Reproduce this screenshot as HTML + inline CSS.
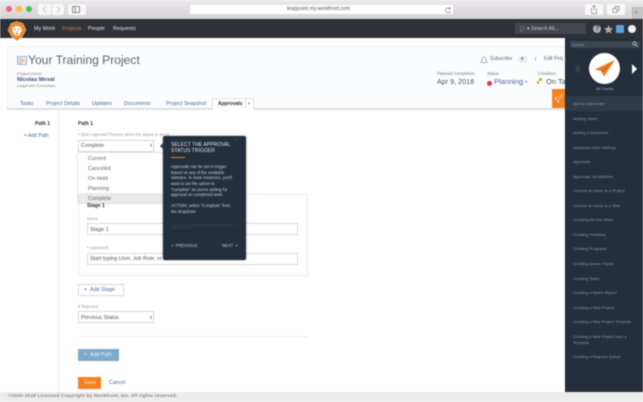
<!DOCTYPE html>
<html><head><meta charset="utf-8"><style>
html,body{margin:0;padding:0;width:643px;height:402px;overflow:hidden;background:#fff}
#w{position:relative;width:643px;height:402px;overflow:hidden;font-family:"Liberation Sans",sans-serif;filter:blur(.5px);background:#fff}
#w div,#w span.a{position:absolute;white-space:nowrap}
.t{line-height:8px;height:8px}
.sel{background:#fff;border:1px solid #dcdcdc;border-radius:1px;box-sizing:border-box;box-shadow:0 0 1px #ccc}
.in{background:#fff;border:1px solid #dadada;box-sizing:border-box}
.g{color:#9a9ea3;font-size:4.2px}
.d{color:#555;font-size:5.4px}
.s{color:#8d99a6;font-size:4px;left:573px}
.p{color:#c4ccd4;font-size:4.1px;left:171px}
</style></head><body><div id="w">
<!-- browser chrome -->
<div style="left:0;top:0;width:643px;height:19px;background:linear-gradient(#eceaec,#d3d2d3)"></div>
<div style="left:6px;top:6px;width:6px;height:6px;border-radius:50%;background:#f2647a"></div>
<div style="left:16px;top:6px;width:6px;height:6px;border-radius:50%;background:#f6bd3a"></div>
<div style="left:26px;top:6px;width:6px;height:6px;border-radius:50%;background:#3ec84a"></div>
<div style="left:38px;top:4px;width:13px;height:11px;background:#f7f7f7;border-radius:2px"></div>
<div style="left:52px;top:4px;width:12px;height:11px;background:#f7f7f7;border-radius:2px"></div>
<div style="left:68px;top:4px;width:18px;height:11px;background:#f7f7f7;border-radius:2px"></div>
<svg style="position:absolute;left:38px;top:4px" width="48" height="11" fill="none" stroke="#bbb" stroke-width=".8"><path d="M8 3L5 5.500 8 8M19 3l3 2.500L19 8"/><rect x="34.500" y="2.500" width="7" height="6" stroke="#777"/><path d="M37 2.500v6" stroke="#777"/></svg>
<div style="left:190px;top:5px;width:263px;height:9px;background:#fff;border-radius:1px"></div>
<div class="t" style="left:287px;top:5px;font-size:5.200px;color:#555">leappoint.my.workfront.com</div>
<svg style="position:absolute;left:444px;top:6px" width="8" height="8" fill="none" stroke="#888" stroke-width=".7"><path d="M6 2.500A2.500 2.500 0 1 0 6.500 5M6 1v2H4"/></svg>
<div style="left:585px;top:4px;width:18px;height:11px;background:#f8f8f8;border-radius:2px"></div>
<div style="left:607px;top:4px;width:18px;height:11px;background:#f8f8f8;border-radius:2px"></div>
<svg style="position:absolute;left:585px;top:4px" width="40" height="11" fill="none" stroke="#888" stroke-width=".7"><path d="M7 4.500H6.500V9.500H11.500V4.500H11M9 1.500V6.500M7.500 3L9 1.500 10.500 3"/><path d="M28 4.500h4v4h-4zM30 4.500V2.500h4v4h-2"/></svg>
<div style="left:632px;top:7px;width:11px;height:12px;background:#c6c6c6;border:1px solid #b5b5b5;box-sizing:border-box"></div>
<div class="t" style="left:634px;top:9px;font-size:8px;color:#888">+</div>
<!-- nav -->
<div style="left:0;top:19px;width:643px;height:19px;background:#2e3238"></div>
<svg style="position:absolute;left:7px;top:21px" width="20" height="20"><path d="M10 .5L16 2.500 19 9 15 16 10 19.500 5 16 1 9 4 2.500Z" fill="#ec8a32" stroke="#f2ae70" stroke-width=".6"/><path d="M10 5c3 0 5 2 4.500 5L12 14.500H8L5.500 10C5 7 7 5 10 5Z" fill="#fff"/><path d="M7 8.500h2.200M10.800 8.500H13M10 10v2.500M8.500 13h3" stroke="#d97a25" stroke-width=".9"/></svg>
<div class="t" style="left:34px;top:25px;font-size:5.400px;color:#dfe1e4">My Work</div>
<div class="t" style="left:62px;top:25px;font-size:5.400px;color:#c9803f">Projects</div>
<div class="t" style="left:88px;top:25px;font-size:5.400px;color:#dfe1e4">People</div>
<div class="t" style="left:113px;top:25px;font-size:5.400px;color:#dfe1e4">Requests</div>
<div style="left:515px;top:23px;width:71px;height:11px;background:#43474d;border-radius:1px"></div>
<svg style="position:absolute;left:518px;top:25px" width="8" height="8" fill="none" stroke="#777" stroke-width=".7"><circle cx="4.500" cy="3.500" r="2"/><path d="M3 5L1.500 6.500"/></svg>
<div class="t" style="left:527px;top:25px;font-size:5.200px;color:#c8cbcf">▾ Search All...</div>
<div style="left:593px;top:25px;width:8px;height:8px;border-radius:50%;background:#a9adb1"></div>
<div class="t" style="left:595.500px;top:25px;font-size:6px;color:#2e3238;font-weight:bold">?</div>
<svg style="position:absolute;left:604px;top:25px" width="9" height="9"><path d="M4.500 0l1.300 3 3.200.3-2.400 2.100.7 3.100-2.800-1.700-2.800 1.700.7-3.100L0 3.300 3.200 3z" fill="#a9adb1"/></svg>
<div style="left:616px;top:25px;width:8px;height:8px;background:#5e9fe0;border-radius:1px"></div>
<div style="left:628px;top:25px;width:8px;height:8px;border-radius:50%;background:#eef0f3"></div>
<!-- project header -->
<div style="left:7px;top:46px;width:558px;height:64px;background:#fbfcfe;border-top:1px solid #ececec;border-left:1px solid #efefef;box-sizing:border-box"></div>
<div style="left:7px;top:108px;width:558px;height:2px;background:#dedede"></div>
<svg style="position:absolute;left:17px;top:56px" width="10" height="9"><rect width="10" height="9" fill="#9db8cf"/><rect x="1" y="1" width="8" height="7" fill="#e9eef3"/><path d="M2 3h4M2 5h6M2 7h3" stroke="#e08a3a" stroke-width=".8"/></svg>
<div style="left:28px;top:52px;font-size:12.100px;line-height:16px;color:#5f646a">Your Training Project</div>
<div class="t" style="left:17px;top:70px;font-size:4px;color:#777">Project Owner</div>
<div class="t" style="left:17px;top:76px;font-size:5.700px;color:#37508c;font-weight:bold">Nicolas Mexal</div>
<div class="t" style="left:17px;top:82px;font-size:4px;color:#777">LeapPoint Consultant</div>
<div class="t" style="left:20px;top:100px;font-size:5.300px;color:#4d6a8e">Tasks</div>
<div class="t" style="left:46px;top:100px;font-size:5.300px;color:#4d6a8e">Project Details</div>
<div class="t" style="left:92px;top:100px;font-size:5.300px;color:#4d6a8e">Updates</div>
<div class="t" style="left:124px;top:100px;font-size:5.300px;color:#4d6a8e">Documents</div>
<div class="t" style="left:166px;top:100px;font-size:5.300px;color:#4d6a8e">Project Snapshot</div>
<div style="left:212px;top:98px;width:42px;height:12px;background:#fff;border:1px solid #e2e2e2;border-bottom:none;box-sizing:border-box"></div>
<div style="left:245px;top:99px;width:1px;height:9px;background:#e5e5e5"></div>
<div class="t" style="left:218px;top:100px;font-size:5px;color:#333;font-weight:bold">Approvals</div>
<div class="t" style="left:248px;top:100px;font-size:4px;color:#777">▾</div>
<svg style="position:absolute;left:480px;top:56px" width="8" height="8" fill="none" stroke="#6d8198" stroke-width=".6"><path d="M1 6.500h6L6 5V3A2 2 0 0 0 2 3v2ZM3.500 7.500h1"/></svg>
<div class="t" style="left:490px;top:55px;font-size:5px;color:#4d6a8e">Subscribe</div>
<div style="left:517px;top:56px;width:11px;height:7px;background:#eef0f3;border-radius:3px"></div>
<div class="t" style="left:521px;top:55px;font-size:4.500px;color:#555;font-weight:bold">0</div>
<div style="left:535px;top:57px;width:1px;height:4px;background:#bbb"></div>
<div class="t" style="left:544px;top:55px;font-size:5px;color:#4d6a8e">Edit Proj</div>
<div class="t" style="left:437px;top:70px;font-size:4.200px;color:#777">Planned Completion</div>
<div style="left:437px;top:77px;font-size:7.200px;line-height:10px;color:#555">Apr 9, 2018</div>
<div class="t" style="left:487px;top:70px;font-size:4.200px;color:#777">Status</div>
<div style="left:487px;top:81px;width:5px;height:5px;border-radius:50%;background:#e8353f"></div>
<div style="left:494px;top:77px;font-size:7.500px;line-height:10px;color:#4a6aa0">Planning <span style="font-size:4px;vertical-align:1px">▾</span></div>
<div class="t" style="left:538px;top:70px;font-size:4.200px;color:#777">Condition</div>
<div style="left:539px;top:78px;width:3px;height:3px;background:#8cc63f;border-radius:1px"></div>
<div style="left:537px;top:81px;width:2px;height:3px;background:#e3a23a"></div>
<div style="left:546px;top:77px;font-size:7.500px;line-height:10px;color:#555">On Ta</div>
<div style="left:552px;top:89px;width:13px;height:19px;background:#f58220"></div>
<svg style="position:absolute;left:554px;top:94px" width="9" height="9"><path d="M8.500 .5L.5 4.500 3 5.500 4 8.500Z" fill="none" stroke="#fbd3ac" stroke-width=".7"/></svg>
<!-- left col -->
<div style="left:58px;top:110px;width:1px;height:282px;background:#eee"></div>
<div class="t" style="left:35px;top:120px;font-size:5px;color:#333;font-weight:bold">Path 1</div>
<div class="t" style="left:24px;top:132px;font-size:5px;color:#4d6a9e">+ Add Path</div>
<!-- main -->
<div class="t" style="left:78px;top:120px;font-size:5px;color:#333;font-weight:bold">Path 1</div>
<div class="t g" style="left:78px;top:131px">• Start Approval Process when the status is set to</div>
<div style="left:78px;top:194px;width:230px;height:82px;border:1px solid #efefef;box-sizing:border-box"></div>
<div class="sel" style="left:78px;top:140px;width:76px;height:12px"></div>
<div class="t d" style="left:81px;top:142px">Complete</div>
<div class="t" style="left:149px;top:142px;font-size:4.500px;color:#555">⇕</div>
<div class="t g" style="left:87px;top:215px">Name</div>
<div class="in" style="left:87px;top:223px;width:211px;height:12px"></div>
<div class="t d" style="left:90px;top:226px">Stage 1</div>
<div class="t g" style="left:87px;top:244px">• Approvers</div>
<div class="in" style="left:87px;top:253px;width:211px;height:12px"></div>
<div class="t d" style="left:90px;top:255px">Start typing User, Job Role, or Team</div>
<!-- dropdown -->
<div style="left:78px;top:153px;width:85px;height:50px;background:#fff;box-shadow:0 0 2px #bbb"></div>
<div style="left:78px;top:193px;width:85px;height:10px;background:#e9e9e9"></div>
<div class="t" style="left:87px;top:202px;font-size:5px;color:#333;font-weight:bold">Stage 1</div>
<div class="t d" style="left:88px;top:154.500px;color:#666">Current</div>
<div class="t d" style="left:88px;top:164.500px;color:#666">Canceled</div>
<div class="t d" style="left:88px;top:174.500px;color:#666">On Hold</div>
<div class="t d" style="left:88px;top:184.500px;color:#666">Planning</div>
<div class="t d" style="left:88px;top:194.500px;color:#666">Complete</div>
<!-- popover -->
<div style="left:160px;top:143px;width:0;height:0;border:3.500px solid transparent;border-right-color:#232f3d;border-left:none"></div>
<div style="left:163px;top:136px;width:83px;height:124px;background:#232f3d;border-radius:2px;box-shadow:0 0 2px #888"></div>
<div class="t" style="left:234px;top:136px;font-size:5px;color:#4c5866">×</div>
<div class="t" style="left:171px;top:141px;font-size:5.100px;color:#dfe3e7">SELECT THE APPROVAL</div>
<div class="t" style="left:171px;top:147px;font-size:5.100px;color:#dfe3e7">STATUS TRIGGER</div>
<div style="left:171px;top:157px;width:14px;height:1px;background:#d5803a"></div>
<div class="t p" style="top:163px">Approvals can be set to trigger</div>
<div class="t p" style="top:168.500px">based on any of the available</div>
<div class="t p" style="top:174px">statuses. In most instances, you'll</div>
<div class="t p" style="top:179.500px">want to set the option to</div>
<div class="t p" style="top:185.500px">"complete" as you're adding for</div>
<div class="t p" style="top:191px">approval on completed work.</div>
<div class="t p" style="top:202px">ACTION: select "Complete" from</div>
<div class="t p" style="top:208px">the dropdown</div>
<div class="t" style="left:171px;top:224px;font-size:4px;color:#3c4856">Step 2 of 6</div>
<div style="left:171px;top:225px;width:68px;height:1px;background:#2f3b49"></div>
<div class="t" style="left:171px;top:242px;font-size:4.200px;color:#c4ccd4">«&nbsp; PREVIOUS</div>
<div class="t" style="left:222px;top:242px;font-size:4.200px;color:#c4ccd4">NEXT &nbsp;»</div>
<!-- lower -->
<div class="sel" style="left:78px;top:284px;width:46px;height:12px"></div>
<div class="t" style="left:84px;top:286px;font-size:5.300px;color:#4d6a9e">+ &nbsp;Add Stage</div>
<div class="t g" style="left:78px;top:303px">If Rejected</div>
<div class="sel" style="left:78px;top:311px;width:76px;height:12px"></div>
<div class="t d" style="left:81px;top:314px">Previous Status</div>
<div class="t" style="left:149px;top:314px;font-size:4.500px;color:#555">⇕</div>
<div style="left:78px;top:336px;width:230px;height:1px;background:#eee"></div>
<div style="left:78px;top:349px;width:41px;height:12px;background:#7fa9cc"></div>
<div class="t" style="left:84px;top:351px;font-size:5.300px;color:#e6eff6">+ &nbsp;Add Path</div>
<div style="left:78px;top:377px;width:23px;height:12px;background:#f58220"></div>
<div class="t" style="left:84px;top:379px;font-size:5.300px;color:#fde3c8">Save</div>
<div class="t" style="left:109px;top:379px;font-size:5.300px;color:#4d6a9e">Cancel</div>
<!-- sidebar -->
<div style="left:565px;top:38px;width:78px;height:354px;background:#242f3b;border-left:1px solid #1f2833;box-sizing:border-box"></div>
<div style="left:570px;top:41px;width:70px;height:7px;background:#3a4753;border-radius:1px"></div>
<div class="t" style="left:572px;top:40.500px;font-size:3.800px;color:#8d99a6">Search...</div>
<svg style="position:absolute;left:632px;top:41px" width="6" height="6" fill="none" stroke="#c3cad1" stroke-width=".7"><circle cx="2.500" cy="2.500" r="1.600"/><path d="M3.800 3.800L5.500 5.500"/></svg>
<div style="left:589px;top:53px;width:31px;height:31px;border-radius:50%;background:#fff"></div>
<svg style="position:absolute;left:594px;top:60px" width="22" height="17"><path d="M21 0L.5 9.500 7 11 10 16.500Z" fill="#f0801f"/><path d="M21 0L7 11 9 12Z" fill="#c9661a"/></svg>
<svg style="position:absolute;left:573px;top:63px" width="66" height="12"><path d="M6.500 1L1.500 6 6.500 11Z" fill="#36424e"/><path d="M59 1L64 6 59 11Z" fill="#fff"/></svg>
<div class="t" style="left:596px;top:85px;font-size:3.900px;color:#a5afb9">All Guides</div>
<div style="left:566px;top:96px;width:77px;height:15px;background:#2e3b49"></div>
<div class="t s" style="top:99.500px">Ad-hoc Approvals</div>
<div class="t s" style="top:114.500px">Adding Users</div>
<div class="t s" style="top:129px">Adding a Document</div>
<div class="t s" style="top:143.500px">Advanced View Settings</div>
<div class="t s" style="top:158px">Approvals</div>
<div class="t s" style="top:172.500px">Approvals via MyWork</div>
<div class="t s" style="top:187px">Convert an Issue to a Project</div>
<div class="t s" style="top:201.500px">Convert an Issue to a Task</div>
<div class="t s" style="top:216px">Creating Ad-Hoc Work</div>
<div class="t s" style="top:230.500px">Creating Portfolios</div>
<div class="t s" style="top:245px">Creating Programs</div>
<div class="t s" style="top:260px">Creating Queue Topics</div>
<div class="t s" style="top:274.500px">Creating Tasks</div>
<div class="t s" style="top:289px">Creating a Matrix Report</div>
<div class="t s" style="top:303.500px">Creating a New Project</div>
<div class="t s" style="top:318px">Creating a New Project Template</div>
<div class="t s" style="top:333px">Creating a New Project from a</div>
<div class="t s" style="top:338.500px">Template</div>
<div class="t s" style="top:352.500px">Creating a Request Queue</div>
<!-- footer -->
<div style="left:0;top:392px;width:643px;height:10px;background:#ececec"></div>
<div class="t" style="left:8px;top:393px;font-size:4.900px;color:#8a8a8a;font-weight:bold;letter-spacing:.1px">©2000-2018 Licensed Copyright by Workfront, Inc. All rights reserved.</div>
</div></body></html>
